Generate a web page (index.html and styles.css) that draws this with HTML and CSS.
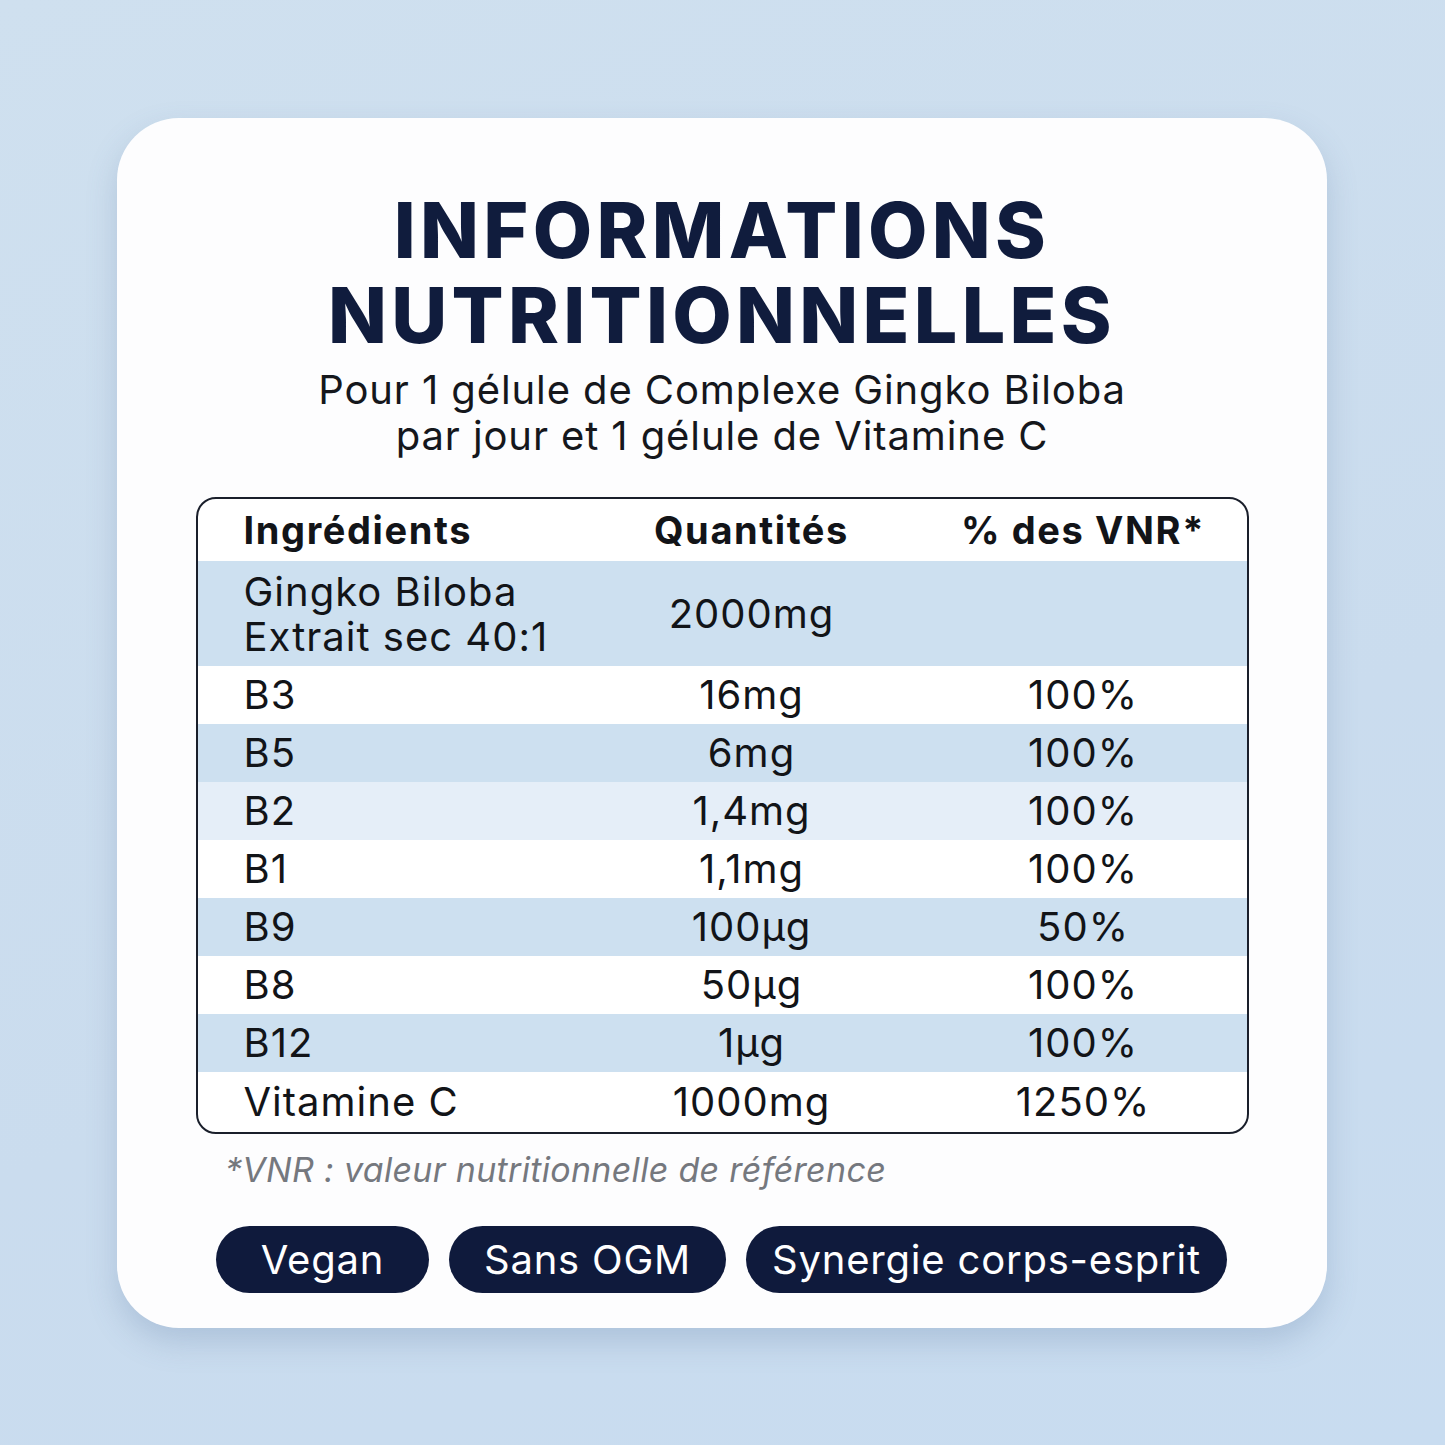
FILE: index.html
```html
<!DOCTYPE html>
<html lang="fr">
<head>
<meta charset="utf-8">
<link rel="stylesheet" href="styles.css">
</head>
<body>
<main class="page">
  <section class="card">
    <h1 class="title">INFORMATIONS<br>NUTRITIONNELLES</h1>
    <p class="subtitle">Pour 1 gélule de Complexe Gingko Biloba<br>par jour et 1 gélule de Vitamine C</p>
    <div class="table">
      <div class="row head"><span class="c1">Ingrédients</span><span class="c2">Quantités</span><span class="c3">% des VNR*</span></div>
      <div class="row blue tall"><span class="c1">Gingko Biloba<br>Extrait sec 40:1</span><span class="c2">2000mg</span><span class="c3"></span></div>
      <div class="row"><span class="c1">B3</span><span class="c2">16mg</span><span class="c3">100%</span></div>
      <div class="row blue"><span class="c1">B5</span><span class="c2">6mg</span><span class="c3">100%</span></div>
      <div class="row light"><span class="c1">B2</span><span class="c2">1,4mg</span><span class="c3">100%</span></div>
      <div class="row"><span class="c1">B1</span><span class="c2">1,1mg</span><span class="c3">100%</span></div>
      <div class="row blue"><span class="c1">B9</span><span class="c2">100µg</span><span class="c3">50%</span></div>
      <div class="row"><span class="c1">B8</span><span class="c2">50µg</span><span class="c3">100%</span></div>
      <div class="row blue"><span class="c1">B12</span><span class="c2">1µg</span><span class="c3">100%</span></div>
      <div class="row last"><span class="c1">Vitamine C</span><span class="c2">1000mg</span><span class="c3">1250%</span></div>
    </div>
    <p class="note">*VNR : valeur nutritionnelle de référence</p>
    <div class="pills">
      <span class="pill p1">Vegan</span>
      <span class="pill p2">Sans OGM</span>
      <span class="pill p3">Synergie corps-esprit</span>
    </div>
  </section>
</main>
</body>
</html>
```

FILE: styles.css
```css
* { box-sizing: border-box; }
html, body { margin: 0; padding: 0; }
body {
  width: 1445px;
  height: 1445px;
  background: linear-gradient(160deg, #cfe0ef 0%, #cadcee 60%, #c8dcf0 100%);
  font-family: "Inter", "Open Sans", sans-serif;
  color: #111418;
  overflow: hidden;
}
.page {
  padding: 118px 117px;
}
.card {
  width: 1210px;
  height: 1210px;
  background: #fdfdfe;
  border-radius: 62px;
  box-shadow: 0 14px 30px rgba(90, 120, 160, 0.25);
  padding: 70px 78px 0;
  display: flex;
  flex-direction: column;
  align-items: center;
}
.title {
  margin: 0;
  font-size: 77px;
  line-height: 85px;
  font-weight: 800;
  text-align: center;
  color: #101c3d;
  letter-spacing: 4.3px;
}
.subtitle {
  margin: 9px 0 0;
  font-size: 40px;
  line-height: 46px;
  text-align: center;
  color: #15171c;
  font-weight: 400;
  letter-spacing: 0.9px;
}
.table {
  margin-top: 38px;
  width: 1053px;
  border: 2px solid #1a1f2b;
  border-radius: 20px;
  overflow: hidden;
  background: #fff;
}
.row {
  display: grid;
  grid-template-columns: 418px 272px 1fr;
  align-items: center;
  height: 58px;
  font-size: 40px;
  line-height: 48px;
  letter-spacing: 1px;
  color: #121418;
}
.row.head { height: 62px; font-weight: 700; font-size: 38px; letter-spacing: 1.6px; }
.row.tall { height: 105px; line-height: 45px; }
.row.blue { background: #cde0f0; }
.row.light { background: #e5eef8; }
.row.last { height: 60px; }
.c1 { padding-left: 46px; }
.c2 { text-align: center; }
.c3 { text-align: center; padding-left: 32px; }
.note {
  align-self: flex-start;
  margin: 15px 0 0 30px;
  font-size: 34px;
  line-height: 41px;
  font-style: italic;
  color: #75787e;
  font-weight: 400;
  letter-spacing: 0.3px;
}
.pills {
  margin-top: 36px;
  display: flex;
  gap: 20px;
  align-self: flex-start;
  margin-left: 21px;
}
.pill {
  height: 67px;
  border-radius: 34px;
  background: #0f1a3c;
  color: #fff;
  font-size: 40px;
  letter-spacing: 0.8px;
  display: flex;
  align-items: center;
  justify-content: center;
}
.p1 { width: 213px; }
.p2 { width: 277px; }
.p3 { width: 481px; }
```
